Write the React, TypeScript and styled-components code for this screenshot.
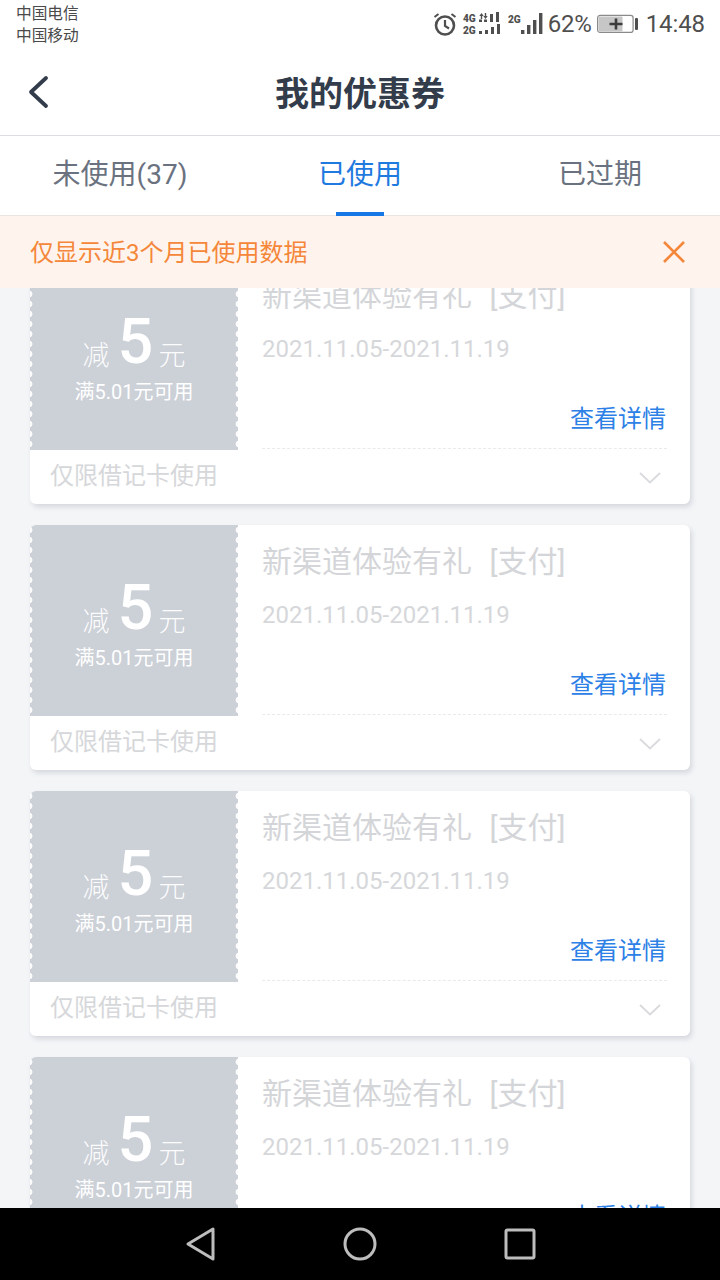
import React from "react";
import styled, { createGlobalStyle } from "styled-components";

const Global = createGlobalStyle`
  html, body { margin: 0; padding: 0; background: #f3f4f7; }
  * { box-sizing: border-box; }
  body { font-family: Roboto, "Noto Sans CJK SC", sans-serif; }
`;
const Page = styled.div`
  width: 720px; height: 1280px; display: flex; flex-direction: column; overflow: hidden; background: #f4f5f7;
`;
const StatusBar = styled.div`
  height: 50px; background: #fff; display: flex; justify-content: space-between; padding: 3px 15px 0 16px;
`;
const Carriers = styled.div`
  font-size: 15.7px; line-height: 22px; color: #4a4a4a; width: 80px;
`;
const StatusRight = styled.div`
  display: flex; align-items: center; height: 42px; color: #4f4f4f;
`;
const Percent = styled.span`
  font-size: 24px; margin-left: 3px; line-height: 42px; letter-spacing: -0.2px;
`;
const Time = styled.span`
  font-size: 24px; margin-left: 7px; line-height: 42px; letter-spacing: -0.1px;
`;
const NetStack = styled.div`
  display: flex; flex-direction: column; font-size: 11.5px; font-weight: 900; line-height: 12px; margin: 0 0 0 6px; width: 15px; white-space: nowrap;
  span { display: block; transform: scaleX(.88); transform-origin: left; }
`;
const NetLabel = styled.div`
  font-size: 11.5px; font-weight: 900; line-height: 12px; align-self: flex-start; margin: 10px 0 0 7px; width: 13px; transform: scaleX(.88); transform-origin: left;
`;
const Header = styled.header`
  height: 86px; background: #fff; border-bottom: 1px solid #dcdde0; display: flex; align-items: center; justify-content: center; position: relative;
`;
const BackButton = styled.div`
  position: absolute; left: 26px; top: 24px; width: 28px; height: 36px; display: flex;
`;
const Title = styled.h1`
  margin: 0; font-size: 34px; font-weight: 700; color: #333c4b; line-height: 86px; padding-bottom: 2px; font-family: "Noto Sans CJK SC", sans-serif;
`;
const Tabs = styled.nav`
  height: 80px; background: #fff; display: grid; grid-template-columns: repeat(3, 240px); box-shadow: inset 0 -1px 0 #e8e4e1;
`;
const Tab = styled.div<{ $active?: boolean }>`
  position: relative; text-align: center; font-size: 28px; line-height: 77px; color: ${(p) => (p.$active ? "#1f7ae0" : "#6a7280")};
  ${(p) => p.$active && `
    &::after { content: ""; position: absolute; left: 96px; bottom: 0; width: 48px; height: 4px; background: #1677e6; }
  `}
`;
const Banner = styled.div`
  height: 72px; background: #fef4ed; display: flex; align-items: center; justify-content: space-between; padding: 0 33px 0 30px; color: #f5873a; font-size: 24px; position: relative; z-index: 2;
`;
const BannerText = styled.span`
  padding-bottom: 4px;
`;
const CloseButton = styled.div`
  width: 26px; height: 26px; display: flex;
`;
const List = styled.main`
  flex: 1; min-height: 0; overflow: hidden; padding: 0 30px; display: flex; flex-direction: column; gap: 21px;
`;
const Card = styled.article`
  flex: none; height: 245px; background: #fff; border-radius: 6px; box-shadow: 2px 3px 5px rgba(150, 156, 170, .32);
  &:first-child { margin-top: -29px; }
`;
const Top = styled.div`
  height: 191px; display: flex;
`;
const Stub = styled.div`
  width: 208px; background: #ccd0d7; color: #fff; position: relative; display: flex; flex-direction: column; align-items: center; padding-top: 53px; border-top-left-radius: 6px;
  &::before, &::after {
    content: ""; position: absolute; top: 0; bottom: 0; width: 3px;
    background-image: radial-gradient(circle at var(--x) 5px, #fbfbfc 3px, transparent 3.8px);
    background-size: 3px 10px;
  }
  &::before { left: 0; --x: -1px; }
  &::after { right: 0; --x: 4px; }
`;
const Amount = styled.div`
  display: flex; align-items: baseline; height: 60px;
`;
const Unit = styled.span`
  font-size: 27px; font-weight: 300; opacity: .95; transform: translateY(2px);
`;
const Value = styled.span`
  font-size: 63px; font-weight: 500; margin: 0 5px 0 8px; line-height: 60px; font-family: Roboto, sans-serif;
`;
const Threshold = styled.div`
  font-size: 20px; line-height: 26px; margin-top: 7px; white-space: nowrap;
`;
const Info = styled.div`
  flex: 1; display: flex; flex-direction: column; margin: 0 23px 1px 24px; border-bottom: 1.5px dashed #e9eaeb; padding-top: 18px; position: relative;
`;
const CardTitle = styled.div`
  font-size: 30px; color: #d4d5d8; line-height: 38px; white-space: pre; word-spacing: 10px;
`;
const DateText = styled.div`
  font-size: 24px; color: #d6d7da; line-height: 30px; margin-top: 19px;
`;
const DetailLink = styled.div`
  color: #2c80e6; font-size: 24px; line-height: 32px; margin-top: auto; padding-bottom: 13px; text-align: right; margin-right: 1px;
`;
const Foot = styled.div`
  height: 54px; display: flex; justify-content: space-between; align-items: center; padding: 0 29px 1px 20px; color: #d6d7da; font-size: 24px;
`;
const FootText = styled.span`
  padding-bottom: 6px;
`;
const Chevron = styled.svg`
  margin-top: 2px;
`;
const NavBar = styled.footer`
  height: 72px; background: #000; display: flex; align-items: center; justify-content: center; gap: 104px; position: relative; z-index: 2;
`;
const NavIcon = styled.svg`
  width: 56px; height: 40px;
`;

const Coupon = () => (
  <Card>
    <Top>
      <Stub>
        <Amount>
          <Unit>减</Unit>
          <Value>5</Value>
          <Unit>元</Unit>
        </Amount>
        <Threshold>满5.01元可用</Threshold>
      </Stub>
      <Info>
        <CardTitle>新渠道体验有礼 [支付]</CardTitle>
        <DateText>2021.11.05-2021.11.19</DateText>
        <DetailLink>查看详情</DetailLink>
      </Info>
    </Top>
    <Foot>
      <FootText>仅限借记卡使用</FootText>
      <Chevron width="22" height="12" viewBox="0 0 22 12" fill="none" stroke="#d9dadd" strokeWidth="1.8">
        <path d="M1 1l10 9.5L21 1" />
      </Chevron>
    </Foot>
  </Card>
);

export default function App() {
  return (
    <Page>
      <Global />
      <StatusBar>
        <Carriers>
          <div>中国电信</div>
          <div>中国移动</div>
        </Carriers>
        <StatusRight>
          <svg width="24" height="26" viewBox="0 0 24 26" fill="none" stroke="#4f4f4f" strokeWidth="2.6">
            <circle cx="12" cy="14.5" r="9" />
            <path d="M12 9v6l4 2.5" strokeWidth="2.2" />
            <path d="M1.5 6l4-3M22.5 6l-4-3" strokeWidth="2" />
          </svg>
          <NetStack>
            <span>4G</span>
            <span>2G</span>
          </NetStack>
          <svg width="23" height="26" viewBox="0 0 23 26" fill="#4f4f4f">
            <path d="M3.5 2L1.3 5h1.5v3h1.4V5h1.5zM7.5 8l2.2-3H8.2V2H6.8v3H5.300z" />
            <rect x="1" y="8.500" width="3" height="2.500" />
            <rect x="6" y="8.500" width="3" height="2.500" />
            <rect x="12" y="3" width="3" height="8" />
            <rect x="18" y="1" width="3" height="10" />
            <rect x="1" y="20" width="3" height="3" />
            <rect x="7" y="19" width="3" height="4" />
            <rect x="13" y="16" width="3" height="7" />
            <rect x="19" y="13" width="3" height="10" />
          </svg>
          <NetLabel>2G</NetLabel>
          <svg width="24" height="24" viewBox="0 0 24 24" fill="#4f4f4f">
            <rect x="0" y="18" width="3.4" height="4" />
            <rect x="6" y="13" width="3.4" height="9" />
            <rect x="12" y="8" width="3.4" height="14" />
            <rect x="18" y="1" width="3.4" height="21" />
          </svg>
          <Percent>62%</Percent>
          <svg width="42" height="22" viewBox="0 0 42 22" style={{ marginLeft: 5 }}>
            <rect x="0.6" y="2.400" width="35.500" height="17" rx="2.500" fill="none" stroke="#8a8a8a" strokeWidth="1.2" />
            <rect x="1.500" y="3.400" width="24" height="15" rx="1" fill="#c6c6c6" />
            <path d="M12.500 11h13M19 5.500v11" stroke="#3d3d3d" strokeWidth="2.600" />
            <rect x="38" y="5" width="3" height="12" rx="1" fill="#4f4f4f" />
          </svg>
          <Time>14:48</Time>
        </StatusRight>
      </StatusBar>
      <Header>
        <BackButton>
          <svg width="28" height="36" viewBox="0 0 28 36" fill="none" stroke="#333c4b" strokeWidth="3.8" strokeLinecap="round" strokeLinejoin="round">
            <path d="M20 4L5 18l15 14" />
          </svg>
        </BackButton>
        <Title>我的优惠券</Title>
      </Header>
      <Tabs>
        <Tab>未使用(37)</Tab>
        <Tab $active>已使用</Tab>
        <Tab>已过期</Tab>
      </Tabs>
      <Banner>
        <BannerText>仅显示近3个月已使用数据</BannerText>
        <CloseButton>
          <svg width="26" height="26" viewBox="0 0 26 26" fill="none" stroke="#f5873a" strokeWidth="2.6">
            <path d="M3 3l20 20M23 3L3 23" />
          </svg>
        </CloseButton>
      </Banner>
      <List>
        <Coupon />
        <Coupon />
        <Coupon />
        <Coupon />
      </List>
      <NavBar>
        <NavIcon viewBox="0 0 56 40" fill="none" stroke="#bdbdbd" strokeWidth="3" strokeLinejoin="round">
          <path d="M41 5v30L16 20z" />
        </NavIcon>
        <NavIcon viewBox="0 0 56 40" fill="none" stroke="#bdbdbd" strokeWidth="3">
          <circle cx="28" cy="20" r="15" />
        </NavIcon>
        <NavIcon viewBox="0 0 56 40" fill="none" stroke="#bdbdbd" strokeWidth="3" strokeLinejoin="round">
          <rect x="14" y="6" width="28" height="28" rx="1.500" />
        </NavIcon>
      </NavBar>
    </Page>
  );
}
